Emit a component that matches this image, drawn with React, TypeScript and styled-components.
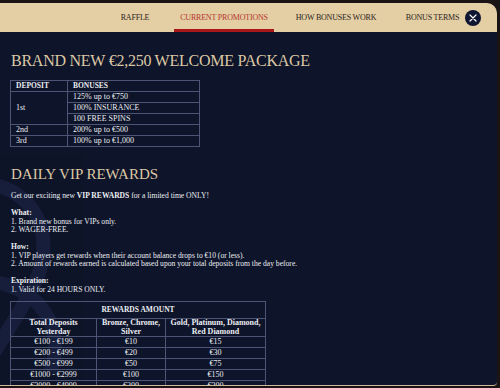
import React from "react";
import styled, { createGlobalStyle } from "styled-components";

const Global = createGlobalStyle`
  html, body { margin: 0; padding: 0; background: #1b1414; }
  body { width: 500px; height: 388px; overflow: hidden; }
`;

const Modal = styled.div`
  margin-top: 3px;
  width: 497px;
  height: 382px;
  display: flex;
  flex-direction: column;
  background: #0e1429;
  border-radius: 0 10px 4px 0;
  border-bottom: 1px solid #cdb89a;
  overflow: hidden;
  position: relative;
`;

const Header = styled.div`
  height: 29px;
  flex: none;
  background: #e4cea4;
  display: flex;
  align-items: center;
  justify-content: flex-end;
  padding-right: 16px;
`;

const Tab = styled.div<{ $active?: boolean; $w: number }>`
  width: ${(p) => p.$w}px;
  height: 29px;
  box-sizing: border-box;
  padding-top: 3px;
  margin-left: 16px;
  display: flex;
  align-items: center;
  justify-content: center;
  white-space: nowrap;
  font-family: "Liberation Serif", serif;
  font-size: 8px;
  letter-spacing: -0.2px;
  color: ${(p) => (p.$active ? "#b4372d" : "#2b2420")};
  border-bottom: 3px solid ${(p) => (p.$active ? "#a8161a" : "transparent")};
`;

const Close = styled.div`
  width: 16px;
  height: 16px;
  margin-left: -2px;
  border-radius: 50%;
  background: #0f1631;
  display: flex;
  align-items: center;
  justify-content: center;
`;

const Body = styled.div`
  flex: 1;
  display: flex;
  position: relative;
  overflow: hidden;
`;

const Scroll = styled.div`
  flex: 1;
  overflow-y: scroll;
  position: relative;
  &::-webkit-scrollbar { width: 7px; }
  &::-webkit-scrollbar-track {
    border-left: 1px solid #cdb89a;
    border-right: 1px solid #cdb89a;
    border-bottom-right-radius: 4px;
  }
  &::-webkit-scrollbar-thumb { background: #d4bf9c; }
`;

const Watermark = styled.svg`
  position: absolute;
  left: 0;
  top: 0;
  pointer-events: none;
`;

const Content = styled.div`
  position: relative;
  padding: 19px 0 30px 10px;
  color: #eceef3;
  font-family: "Liberation Serif", serif;
`;

const Title = styled.h2<{ $top?: number; $size: number; $ls?: number }>`
  margin: ${(p) => p.$top ?? 0}px 0 0 1px;
  font-family: "Liberation Serif", serif;
  font-weight: 400;
  font-size: ${(p) => p.$size}px;
  line-height: 20px;
  color: #dcc8a6;
  letter-spacing: ${(p) => p.$ls ?? 0}px;
`;

const Table = styled.table<{ $w: number; $top: number }>`
  border-collapse: collapse;
  width: ${(p) => p.$w}px;
  margin-top: ${(p) => p.$top}px;
  font-size: 8px;
  color: #eceef3;
  td, th {
    border: 1px solid #4d5576;
    padding: 0 5px;
    height: 10px;
    line-height: 8px;
    text-align: left;
    font-weight: 400;
  }
  th { font-weight: 700; font-size: 7.5px; }
`;

const Table2 = styled(Table)`
  td, th { text-align: center; height: 10px; padding: 0 4px; }
  th { font-size: 8px; line-height: 8.5px; height: 17px; }
  tr:first-child th { height: 16px; font-size: 7.5px; }
`;

const Text = styled.div`
  margin: 8px 0 0 1px;
  font-size: 7.6px;
  line-height: 8.5px;
  color: #eceef3;
  b { font-weight: 700; }
`;

export default function App() {
  return (
    <>
      <Global />
      <Modal>
        <Header>
          <Tab $w={46}>RAFFLE</Tab>
          <Tab $w={100} $active>CURRENT PROMOTIONS</Tab>
          <Tab $w={92}>HOW BONUSES WORK</Tab>
          <Tab $w={69}>BONUS TERMS</Tab>
          <Close>
            <svg width="8" height="8" viewBox="0 0 8 8">
              <path d="M1 1L7 7M7 1L1 7" stroke="#fff" strokeWidth="1.2" strokeLinecap="round" />
            </svg>
          </Close>
        </Header>
        <Body>
          <Scroll>
            <Watermark width="120" height="700" viewBox="0 0 120 700">
              <g fill="none" stroke="#18203d" strokeWidth="14" opacity="0.9">
                <path d="M-30 150 C 40 150, 60 210, 30 260 C 10 300, -10 320, -20 350" />
                <path d="M-40 250 C 30 240, 70 290, 50 340" />
              </g>
            </Watermark>
            <Content>
              <Title $size={16} $ls={-0.25}>BRAND NEW €2,250 WELCOME PACKAGE</Title>
              <Table $w={190} $top={9}>
                <colgroup>
                  <col style={{ width: 57 }} />
                  <col />
                </colgroup>
                <tbody>
                  <tr><th>DEPOSIT</th><th>BONUSES</th></tr>
                  <tr><td rowSpan={3}>1st</td><td>125% up to €750</td></tr>
                  <tr><td>100% INSURANCE</td></tr>
                  <tr><td>100 FREE SPINS</td></tr>
                  <tr><td>2nd</td><td>200% up to €500</td></tr>
                  <tr><td>3rd</td><td>100% up to €1,000</td></tr>
                </tbody>
              </Table>
              <Title $top={17} $size={15}>DAILY VIP REWARDS</Title>
              <Text>
                Get our exciting new <b>VIP REWARDS</b> for a limited time ONLY!
                <br /><br />
                <b>What:</b><br />
                1. Brand new bonus for VIPs only.<br />
                2. WAGER-FREE.
                <br /><br />
                <b>How:</b><br />
                1. VIP players get rewards when their account balance drops to €10 (or less).<br />
                2. Amount of rewards earned is calculated based upon your total deposits from the day before.
                <br /><br />
                <b>Expiration:</b><br />
                1. Valid for 24 HOURS ONLY.
              </Text>
              <Table2 $w={256} $top={7}>
                <colgroup>
                  <col style={{ width: 86 }} />
                  <col style={{ width: 69 }} />
                  <col />
                </colgroup>
                <tbody>
                  <tr><th colSpan={3}>REWARDS AMOUNT</th></tr>
                  <tr><th>Total Deposits<br />Yesterday</th><th>Bronze, Chrome,<br />Silver</th><th>Gold, Platinum, Diamond,<br />Red Diamond</th></tr>
                  <tr><td>€100 - €199</td><td>€10</td><td>€15</td></tr>
                  <tr><td>€200 - €499</td><td>€20</td><td>€30</td></tr>
                  <tr><td>€500 - €999</td><td>€50</td><td>€75</td></tr>
                  <tr><td>€1000 - €2999</td><td>€100</td><td>€150</td></tr>
                  <tr><td>€3000 - €4999</td><td>€200</td><td>€300</td></tr>
                  <tr><td>€5000+</td><td>€300</td><td>€450</td></tr>
                </tbody>
              </Table2>
              <Text>
                <b>Terms:</b><br />
                1. Rewards are credited automatically the following day.<br />
                2. Standard terms and conditions apply.
              </Text>
            </Content>
          </Scroll>
        </Body>
      </Modal>
    </>
  );
}
